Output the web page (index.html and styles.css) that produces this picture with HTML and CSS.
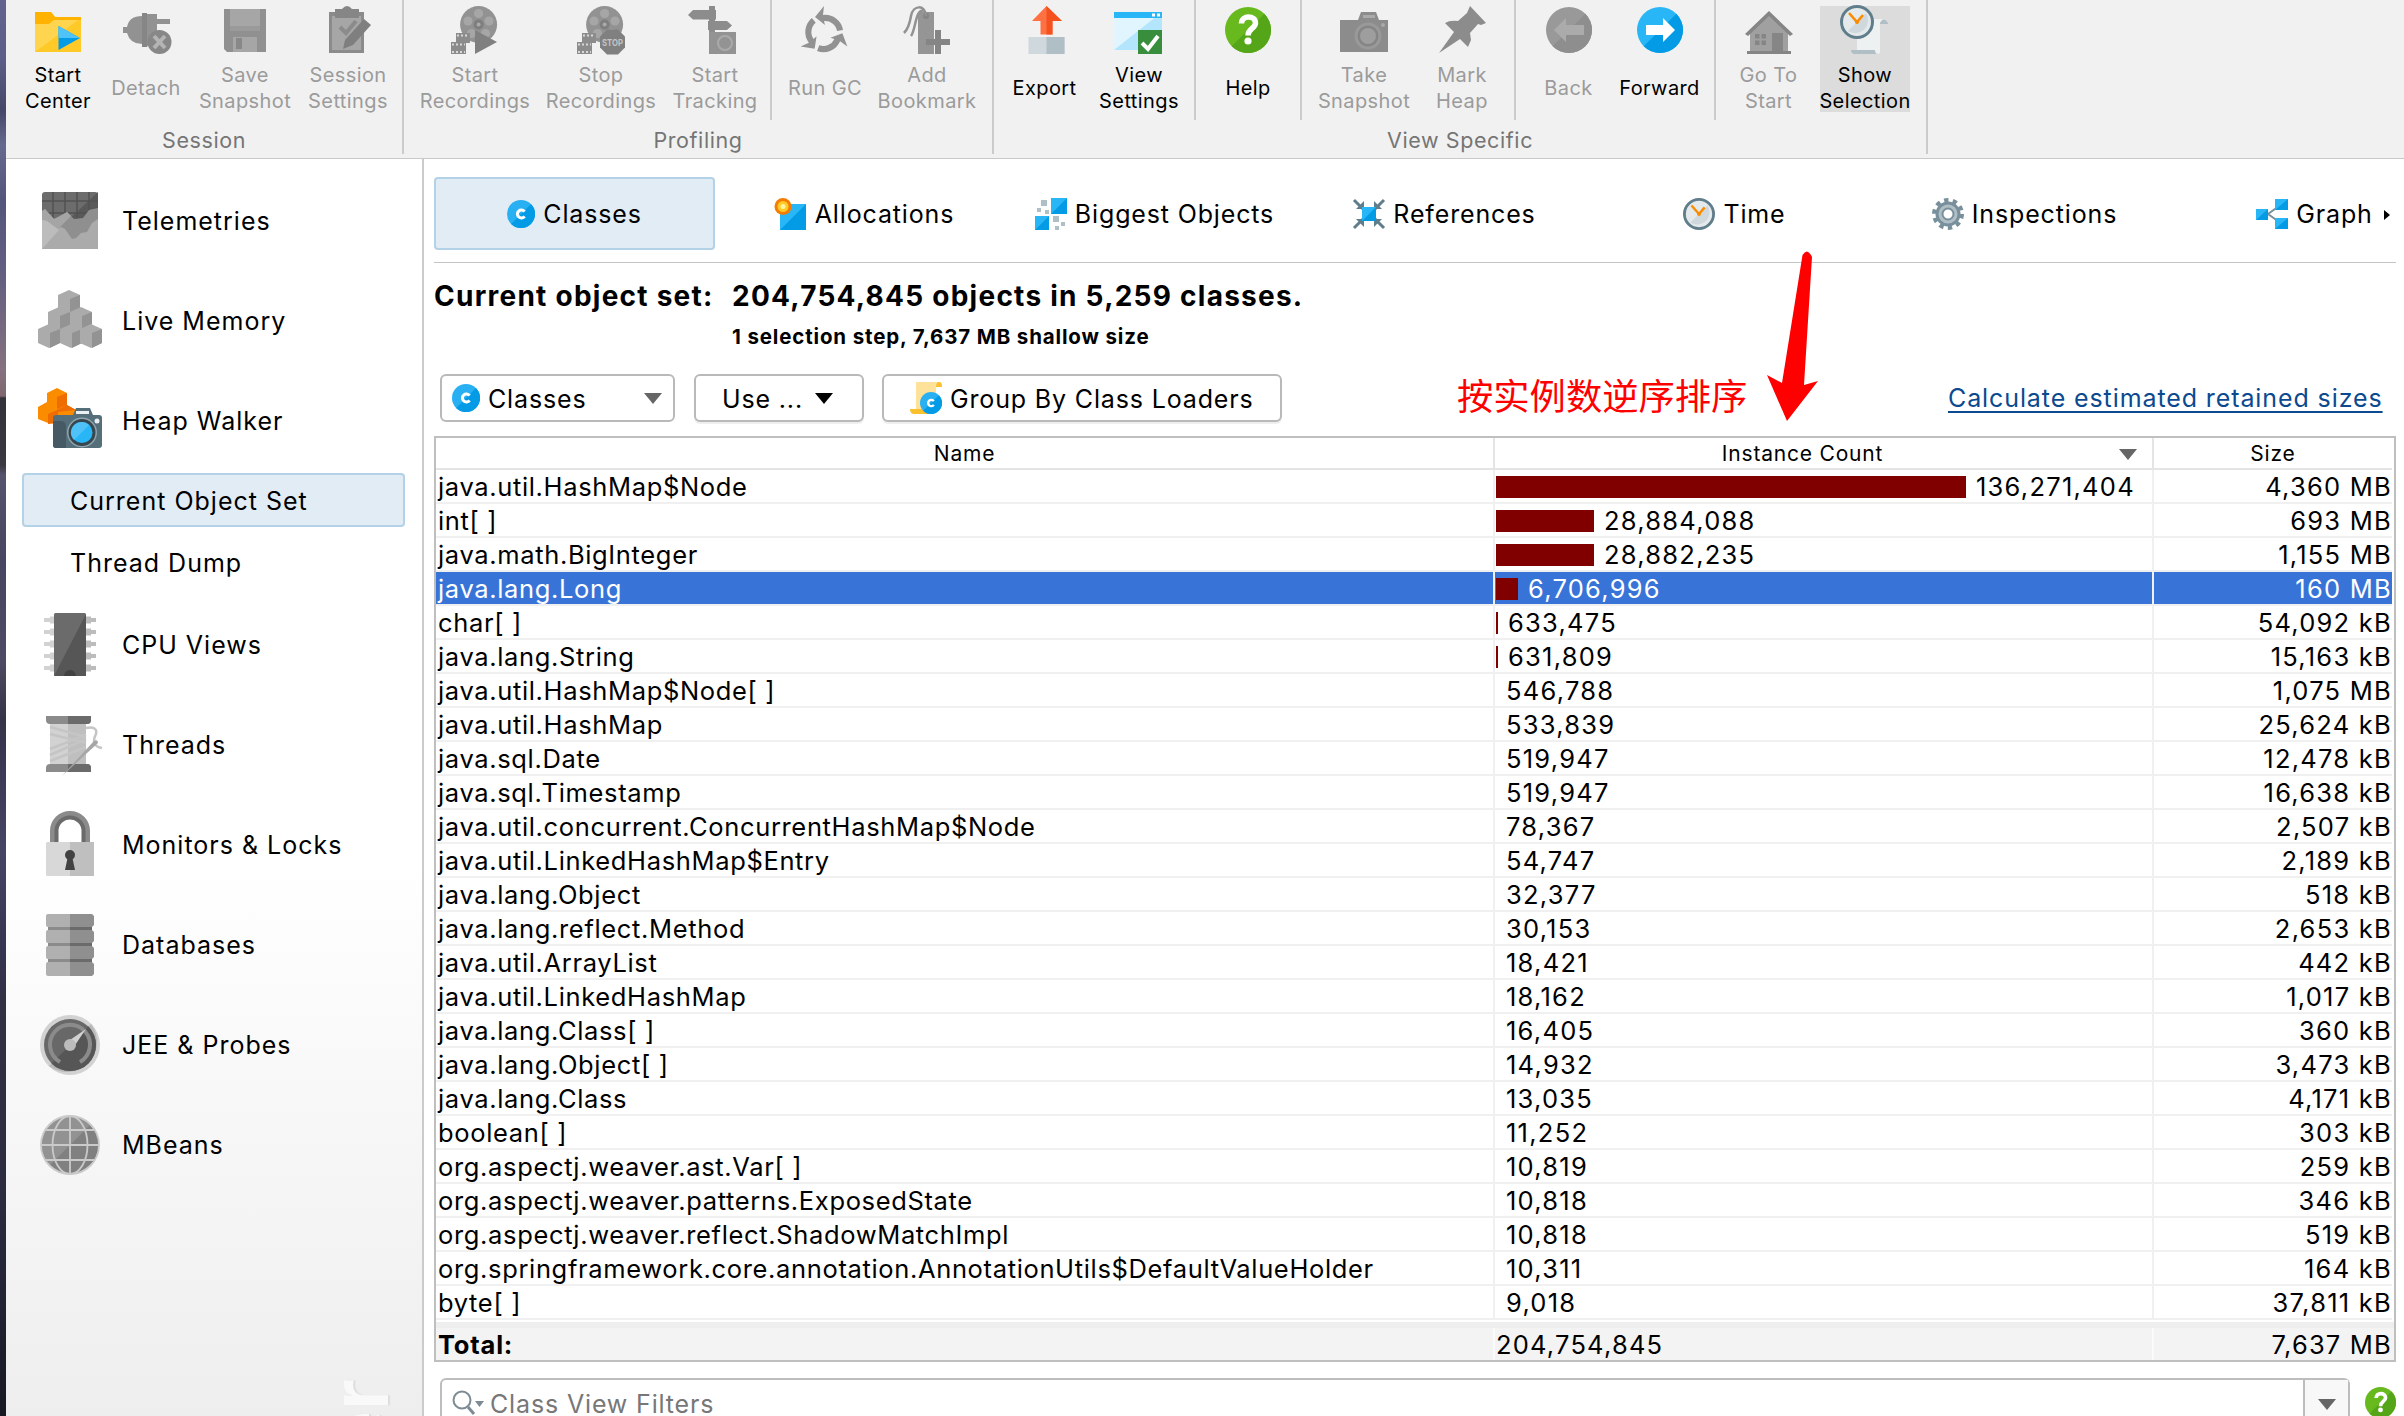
FILE: index.html
```html
<!DOCTYPE html>
<html lang="en">
<head>
<meta charset="utf-8">
<title>Heap Walker</title>
<link rel="stylesheet" href="styles.css">
</head>
<body>
<svg class="defs" width="0" height="0" aria-hidden="true">
  <defs>
    <symbol id="class-icon" viewBox="0 0 28 28">
      <circle cx="14" cy="14" r="14" fill="#29b0f3"/><path d="M24 4A14 14 0 0 1 4 24z" fill="#039be5"/>
      <path d="M17.6 11.6a4 4 0 1 0 0 4.8" fill="none" stroke="#fff" stroke-width="3"/>
    </symbol>
    <symbol id="help-icon" viewBox="0 0 46 46">
      <circle cx="23" cy="23" r="23" fill="#67b91e"/><path d="M39.3 6.7A23 23 0 0 1 6.7 39.3z" fill="#55a518"/>
      <path d="M16.5 16.5c0-9 14-8.500 14-.5 0 5.500-7.500 5.500-7.500 12.500" fill="none" stroke="#fff" stroke-width="5.500"/><circle cx="23" cy="34" r="3.600" fill="#fff"/>
    </symbol>
    <symbol id="clock-icon" viewBox="0 0 34 34">
      <circle cx="17" cy="17" r="15.500" fill="#e4e9eb" stroke="#607d8b" stroke-width="3"/><path d="M26 8A13 13 0 0 1 8 26z" fill="#cfd8dc"/>
      <path d="M9 8l8 9 6-7" fill="none" stroke="#fb8c00" stroke-width="2.600"/><circle cx="17" cy="17" r="2" fill="#fb8c00"/>
    </symbol>
    <symbol id="reel" viewBox="0 0 48 48">
      <circle cx="27.600" cy="18.500" r="18.500" fill="#929292"/>
      <g fill="#a6a6a6"><circle cx="27.600" cy="7.500" r="4.600"/><circle cx="38" cy="15" r="4.600"/><circle cx="34.500" cy="27.500" r="4.600"/><circle cx="20.500" cy="27.500" r="4.600"/><circle cx="17" cy="15" r="4.600"/></g>
      <circle cx="27.600" cy="18.500" r="5" fill="#7e7e7e"/><circle cx="27.600" cy="18.500" r="2" fill="#aaa"/>
      <path d="M5 27h14v10H15v11H-1V36H5z" fill="#8c8c8c"/>
      <path d="M6 29.500h12M1 38.500h13M1 46h13" stroke="#d8d8d8" stroke-width="2" stroke-dasharray="2 2"/>
    </symbol>
    <symbol id="cube" viewBox="0 0 24 24">
      <path d="M0 5L11 0l11 5v14l-11 5-11-5z" fill="#ababab"/><path d="M22 5v14l-10 5V9z" fill="#939393"/>
    </symbol>
  </defs>
</svg>
<div class="window">
  <div class="desktop"></div>
  <div class="app">
    <header class="ribbon">
      <section class="group session">
        <div class="tools">
          <div class="tool on w82"><svg viewBox="0 0 48 48"><path d="M1 6h16l4 5h26v35H1z" fill="#ffca28"/><path d="M1 6h16l4 5h26v3H20l-5 4H1z" fill="#ffb300"/><path d="M1 46V18h14l5-4h24z" fill="#ffd54f"/><path d="M24.500 20v24L46 32z" fill="#039be5"/><path d="M24.500 20v12H46z" fill="#4fc3f7"/></svg><span>Start<br>Center</span></div>
          <div class="tool w94"><svg viewBox="0 0 48 48"><g fill="#929292"><path d="M1 21h4q2-11 15-11v28Q8 38 5 27H1z"/><path d="M20 7h5v1h10v5h13v5H35v9L25 41h-5z"/></g><path d="M20 7h5v34h-5z" fill="#868686"/><circle cx="37.500" cy="36" r="12" fill="#878787"/><path d="M32 30l11 12M43 30L32 42" stroke="#b4b4b4" stroke-width="4"/></svg><span>Detach</span></div>
          <div class="tool w104"><svg viewBox="0 0 48 48"><path d="M3 3h42v43H6l-3-3z" fill="#909090"/><path d="M9 3h30v22H9z" fill="#a6a6a6"/><path d="M9 20h30v5H9z" fill="#9a9a9a"/><path d="M12 31h24v15H12z" fill="#a6a6a6"/><path d="M15 32h6v11h-6z" fill="#888"/></svg><span>Save<br>Snapshot</span></div>
          <div class="tool w102"><svg viewBox="0 0 48 48"><path d="M5 6h35v41H5z" fill="#8b8b8b"/><path d="M8 10h29v34H8z" fill="#a6a6a6"/><path d="M11 3h7q5-6 10 0h7v9H11z" fill="#868686"/><path d="M16 21l6 6L32 15" fill="none" stroke="#8b8b8b" stroke-width="4"/><path d="M40 13l7 6-18 20-10 4 2-9z" fill="#7f7f7f"/></svg><span>Session<br>Settings</span></div>
        </div>
        <div class="caption">Session</div>
      </section>
      <section class="group profiling">
        <div class="tools">
          <div class="tool w120"><svg viewBox="0 0 48 48"><use href="#reel"/><path d="M24 24v24l22-12z" fill="#808080"/></svg><span>Start<br>Recordings</span></div>
          <div class="tool w132"><svg viewBox="0 0 48 48"><use href="#reel"/><path d="M30 23.500h11l7 7v11l-7 7H30l-7-7v-11z" fill="#808080"/><text x="25" y="39.500" class="stop" textLength="21" lengthAdjust="spacingAndGlyphs">STOP</text></svg><span>Stop<br>Recordings</span></div>
          <div class="tool w96"><svg viewBox="0 0 48 48"><g fill="#8c8c8c"><path d="M18 0h6v48h-6z"/><path d="M2 4h23v9.500H2L-3 9z"/><path d="M17 15h19l5 4.500-5 4.500H17z"/></g><path d="M18 26h27v22H18z" fill="#939393"/><circle cx="34" cy="37" r="7" fill="none" stroke="#aaa" stroke-width="2"/></svg><span>Start<br>Tracking</span></div>
          <i class="rule before"></i>
          <div class="tool w90"><svg viewBox="0 0 48 48"><g id="gc" fill="#929292"><path d="M22 9A18 18 0 0 1 42 24l-6 1A12 12 0 0 0 23 15l1 4-10-8L23 0z"/></g><use href="#gc" transform="rotate(120 23 27)"/><use href="#gc" transform="rotate(240 23 27)"/></svg><span>Run GC</span></div>
          <div class="tool w114"><svg viewBox="0 0 48 48"><path d="M15 6h16v42H15z" fill="#959595"/><circle cx="23" cy="10" r="3" fill="#858585"/><path d="M23 10C22-2 10-1 8 10Q6 22 1 27M22 5C12 1 13 24 8 30" fill="none" stroke="#929292" stroke-width="2.500"/><path d="M23 33h9v-9h6v9h9v6h-9v9h-6v-9h-9z" fill="#858585"/></svg><span>Add<br>Bookmark</span></div>
        </div>
        <div class="caption">Profiling</div>
      </section>
      <section class="group specific">
        <div class="tools">
          <div class="tool on w85"><svg viewBox="0 0 48 48"><path d="M25.500 0L41 15h-9.500v13.500h-12V15H11z" fill="#ff7043"/><path d="M25.500 0L41 15h-9.500v13.500h-6z" fill="#f4511e"/><path d="M7.500 31h36v17h-36z" fill="#cfd8dc"/><path d="M25.500 31h18v17h-18z" fill="#b0bec5"/></svg><span>Export</span></div>
          <div class="tool on w104"><svg viewBox="0 0 48 48"><path d="M-1 6h48v38H-1z" fill="#e1f5fe"/><path d="M47 6v38H-1z" fill="#b3e5fc"/><path d="M-1 6h48v6H-1z" fill="#29b6f6"/><path d="M37 9h3m2 0h3" stroke="#fff" stroke-width="3"/><path d="M23 24h24v24H23z" fill="#388e3c"/><path d="M27 37l6 6 10-13" fill="none" stroke="#fff" stroke-width="4"/></svg><span>View<br>Settings</span></div>
          <i class="rule near"></i>
          <div class="tool on w104"><svg viewBox="0 0 48 48"><use href="#help-icon" x="1" y="1" width="46" height="46"/></svg><span>Help</span></div>
          <i class="rule after"></i>
          <div class="tool w112"><svg viewBox="0 0 48 48"><path d="M0 14h18l3-8h15l3 8h9v32H0z" fill="#8c8c8c"/><path d="M23 9h12v3H23z" fill="#aaa"/><circle cx="28" cy="30" r="13.500" fill="#999"/><circle cx="28" cy="30" r="10.500" fill="#858585"/><circle cx="28" cy="30" r="8" fill="#9e9e9e"/><circle cx="43" cy="19" r="2" fill="#aaa"/></svg><span>Take<br>Snapshot</span></div>
          <div class="tool w84"><svg viewBox="0 0 48 48"><path d="M32 0l16 17-5 2-3-1-8 9 1 7-3 7-8-8L1 47l15-21-9-9q5-3 13-2l9-8z" fill="#8c8c8c"/></svg><span>Mark<br>Heap</span></div>
          <i class="rule mid"></i>
          <div class="tool w93"><svg viewBox="0 0 48 48"><circle cx="24" cy="24" r="23" fill="#999"/><path d="M40.300 7.700A23 23 0 0 1 7.700 40.300z" fill="#8e8e8e"/><path d="M9 24l12-12v7h18v10H21v7z" fill="#ababab"/></svg><span>Back</span></div>
          <div class="tool on w89"><svg viewBox="0 0 48 48"><circle cx="24" cy="24" r="23" fill="#29b6f6"/><path d="M40.300 7.700A23 23 0 0 1 7.700 40.300z" fill="#039be5"/><path d="M39 24L27 12v7H10v10h17v7z" fill="#fff"/></svg><span>Forward</span></div>
          <i class="rule mid"></i>
          <div class="tool w93"><svg viewBox="0 0 48 48"><path d="M5 24L24 7l19 17v22H5z" fill="#a0a0a0"/><path d="M0 28L24 5l24 23-3 2L24 10 3 30z" fill="#858585"/><path d="M10 28h11v11H10zM2 45h44v3H2z" fill="#858585"/><path d="M15.500 28v11M10 33.500h11" stroke="#a0a0a0" stroke-width="2"/><path d="M27 27h11v18H27z" fill="#868686"/></svg><span>Go To<br>Start</span></div>
          <div class="tool on active w100"><svg viewBox="0 0 48 48"><path d="M16 13h26q-3 1-3 6v27q0 2-4 2H16z" fill="#eef1f2"/><path d="M39 18v-1q4-7 8 0v1zM10 44h24q0 4 3 4H14q-4 0-4-4z" fill="#b0bec5"/><use href="#clock-icon" x="-1" y="-1" width="34" height="34"/></svg><span>Show<br>Selection</span></div>
        </div>
        <div class="caption">View Specific</div>
      </section>
    </header>
    <div class="body">
      <nav class="sidebar">
        <div class="nav"><svg viewBox="0 0 64 64"><rect x="4" y="3" width="56" height="57" rx="3" fill="#6c6c6c"/><path d="M60 3v30H28z" fill="#595959"/><path d="M15 3v28M27 3v28M39 3v28M51 3v28M4 12h56M4 24h56" stroke="#515151" stroke-width="1.500"/><path d="M4 22l3-2 9 10 6-3 7-4 7 7 9-1 6-8 9-2v41H4z" fill="#8f8f8f"/><path d="M4 22l3-2 9 10 6-3 7-4 4 4L16 44H4z" fill="#a5a5a5"/><path d="M4 60V31l5 1 10 8 4-2 4 2 7 10 4-1 5-5 6-1 5-9 6-4v30z" fill="#ababab"/><path d="M4 60V31l5 1 12 9z" fill="#bcbcbc"/></svg>Telemetries</div>
        <div class="nav"><svg viewBox="0 0 64 64"><use href="#cube" x="20" y="1" width="24" height="24"/><use href="#cube" x="10" y="18" width="24" height="24"/><use href="#cube" x="32" y="18" width="24" height="24"/><use href="#cube" x="0" y="35" width="24" height="24"/><use href="#cube" x="22" y="35" width="24" height="24"/><use href="#cube" x="42" y="35" width="24" height="24"/></svg>Live Memory</div>
        <div class="nav"><svg viewBox="0 0 64 64"><path d="M9 4l10-5 10 5v12l9 5v10H20l-10 3L0 30V18l9-5z" fill="#fb8c00"/><path d="M29 4v12l-10 4V8zM20 23v11l-10 1V25l9-4 10-5 9 5z" fill="#ef6c00"/><path d="M35 26l3-7h14l3 7h6q3 0 3 3v27q0 3-3 3H18q-3 0-3-3V29q0-3 3-3z" fill="#546e7a"/><path d="M15 32h8q5 0 5 6v21H18q-3 0-3-3z" fill="#455a64"/><path d="M38 22h13v3H38z" fill="#eceff1"/><circle cx="44" cy="43.500" r="15" fill="#90a4ae"/><circle cx="44" cy="43.500" r="13.500" fill="#37474f"/><circle cx="44" cy="43.500" r="10.500" fill="#29b6f6"/><path d="M36 51a10.500 10.500 0 0 1 15-15z" fill="#4fc3f7"/><circle cx="59" cy="32" r="2.500" fill="#eceff1"/></svg>Heap Walker</div>
        <div class="sub chosen">Current Object Set</div>
        <div class="sub">Thread Dump</div>
        <div class="nav first"><svg viewBox="0 0 64 64"><path d="M6 7h12m-12 12h12M6 31h12M6 43h12M6 55h12" stroke="#d2d2d2" stroke-width="4"/><path d="M12 7h5m-5 12h5m-5 12h5m-5 12h5m-5 12h5" stroke="#d2d2d2" stroke-width="7"/><path d="M47 7h11M47 19h11M47 31h11M47 43h11M47 55h11" stroke="#bcbcbc" stroke-width="4"/><path d="M47 7h6m-6 12h6m-6 12h6m-6 12h6m-6 12h6" stroke="#bcbcbc" stroke-width="7"/><rect x="16" y="0" width="32" height="63" rx="1.500" fill="#6b6b6b"/><path d="M48 1v62H16z" fill="#565656"/><path d="M26 63a6 6 0 0 1 12 0z" fill="#424242"/></svg>CPU Views</div>
        <div class="nav"><svg viewBox="0 0 64 64"><path d="M12 10h36v42H12z" fill="#d2d2d2"/><path d="M30 10h18v42H30z" fill="#bfbfbf"/><path d="M12 14l36 10M12 21l36 9M12 42l36-16M12 48l36-14M12 36l36-14" stroke="#c5c5c5" stroke-width="2.500"/><path d="M8 3h45v4q0 4-4 4H12q-4 0-4-4zM8 59v-4q0-4 4-4h37q4 0 4 4v4z" fill="#8b8b8b"/><path d="M30 3h23v4q0 4-4 4H30zM30 51h19q4 0 4 4v4H30z" fill="#6b6b6b"/><path d="M48 15q12-2 10 6-6 12 6 14" fill="none" stroke="#c5c5c5" stroke-width="2.500"/><path d="M24 63l32-35q4-2 4 2z" fill="#a6a6a6"/></svg>Threads</div>
        <div class="nav"><svg viewBox="0 0 64 64"><path d="M16 31V18a16 16 0 0 1 32 0v13" fill="none" stroke="#8b8b8b" stroke-width="8"/><path d="M18.500 31V18a13.500 13.500 0 0 1 27 0v13" fill="none" stroke="#6b6b6b" stroke-width="4"/><rect x="8" y="29" width="48" height="34" rx="1.500" fill="#d8d8d8"/><path d="M32 29h24v34H32z" fill="#bfbfbf"/><circle cx="32" cy="42" r="5" fill="#424242"/><path d="M30 43h4l3 14H27z" fill="#424242"/></svg>Monitors &amp; Locks</div>
        <div class="nav"><svg viewBox="0 0 64 64"><path d="M10 5h22v54H10z" fill="#8b8b8b"/><path d="M32 5h22v54H32z" fill="#6b6b6b"/><g fill="#b0b0b0"><rect x="8" y="1" width="30" height="13" rx="2"/><rect x="8" y="17" width="30" height="13" rx="2"/><rect x="8" y="33" width="30" height="13" rx="2"/><rect x="8" y="49" width="30" height="14" rx="2"/></g><path d="M32 1h22l2 2v9l-2 2H32zm0 16h22l2 2v9l-2 2H32zm0 16h22l2 2v9l-2 2H32zm0 16h22l2 2v10l-2 2H32z" fill="#8f8f8f"/></svg>Databases</div>
        <div class="nav"><svg viewBox="0 0 64 64"><circle cx="32" cy="32" r="30" fill="#d2d2d2"/><path d="M53 11A30 30 0 0 1 11 53z" fill="#b8b8b8"/><circle cx="32" cy="32" r="26" fill="#686868"/><path d="M50.400 13.600A26 26 0 0 1 13.600 50.400z" fill="#565656"/><path d="M22 49a20 20 0 1 1 20 0" fill="none" stroke="#8b8b8b" stroke-width="4"/><path d="M29 29l19-13-13 19z" fill="#d2d2d2"/><circle cx="32" cy="32" r="6" fill="#bcbcbc"/></svg>JEE &amp; Probes</div>
        <div class="nav"><svg viewBox="0 0 64 64"><circle cx="32" cy="32" r="29" fill="#929292"/><path d="M52.500 11.500a29 29 0 0 1-41 41z" fill="#808080"/><g fill="none" stroke="#cacaca" stroke-width="1.800"><circle cx="32" cy="32" r="29"/><ellipse cx="32" cy="32" rx="17.500" ry="29"/><path d="M32 3v58M3 32h58M8 17h48M8 47h48"/></g></svg>MBeans</div>
        <div class="brand">JProfiler</div>
      </nav>
      <main class="main">
        <div class="tabs">
          <div class="tab picked"><svg class="i28"><use href="#class-icon"/></svg>Classes</div>
          <div class="tab"><svg class="i32" viewBox="0 0 32 32"><path d="M5 6h26v26H5z" fill="#29b6f6"/><path d="M31 6v26H5z" fill="#039be5"/><circle cx="8" cy="8.500" r="8.500" fill="#f57c00"/><circle cx="8" cy="8.500" r="5.500" fill="#ffca28"/><circle cx="8" cy="8.500" r="2.500" fill="#fff59d"/></svg>Allocations</div>
          <div class="tab"><svg class="i32" viewBox="0 0 32 32"><path d="M16 0h16v16H16zM0 18h14v14H0z" fill="#29b6f6"/><path d="M32 0v16H16zM14 18v14H0z" fill="#039be5"/><path d="M6 2h6v6H6zM2 10h4v4H2zM10 12h4v4h-4zM18 18h6v6h-6zM26 24h4v4h-4zM20 28h4v4h-4z" fill="#b0bec5"/></svg>Biggest Objects</div>
          <div class="tab"><svg class="i32" viewBox="0 0 32 32"><g stroke="#607d8b" stroke-width="3"><path d="M1 2l9 9M31 2l-9 9M1 30l9-9M31 30l-9-9"/></g><path d="M11 3v8H3zM21 3v8h8zM3 21h8v8zM29 21h-8v8z" fill="#607d8b"/><path d="M9 9h14v14H9z" fill="#29b6f6"/><path d="M23 9v14H9z" fill="#039be5"/></svg>References</div>
          <div class="tab"><svg class="i32"><use href="#clock-icon"/></svg>Time</div>
          <div class="tab"><svg class="i32" viewBox="0 0 32 32"><circle cx="16" cy="16" r="14" fill="none" stroke="#78909c" stroke-width="4" stroke-dasharray="4.400 4.400"/><circle cx="16" cy="16" r="8.500" fill="none" stroke="#78909c" stroke-width="8"/><circle cx="16" cy="16" r="8" fill="none" stroke="#b0bec5" stroke-width="3"/></svg>Inspections</div>
          <div class="tab"><svg class="i32" viewBox="0 0 32 32"><path d="M26 6L12 16l14 10" fill="none" stroke="#78909c" stroke-width="2"/><path d="M19 1h13v11H19zM0 11h12v11H0zM19 20h13v11H19z" fill="#29b6f6"/><path d="M32 1v11H19zM12 11v11H0zM32 20v11H19z" fill="#039be5"/></svg>Graph</div>
          <svg class="more" viewBox="0 0 6 10"><path d="M0 0l6 5-6 5z"/></svg>
        </div>
        <div class="summary">
          <div class="what">Current object set:</div>
          <div class="facts"><div class="total">204,754,845 objects in 5,259 classes.</div><div class="step">1 selection step, 7,637 MB shallow size</div></div>
        </div>
        <div class="actions">
          <div class="box combo"><svg class="i28"><use href="#class-icon"/></svg><span>Classes</span><i class="down grey"></i></div>
          <div class="box use"><span>Use ...</span><i class="down"></i></div>
          <div class="box loaders"><svg class="i32" viewBox="0 0 32 32"><path d="M6 0h24q2 1 2 5h-6v22H6z" fill="#ffe29a"/><path d="M26 5q0-5 3-5t3 5zM0 27h20v5H4q-4 0-4-5z" fill="#fbc02d"/><use href="#class-icon" x="10" y="10" width="22" height="22"/></svg><span>Group By Class Loaders</span></div>
          <div class="note">按实例数逆序排序</div>
          <a class="link">Calculate estimated retained sizes</a>
        </div>
        <div class="grid">
          <div class="head"><div>Name</div><div>Instance Count<i class="down grey"></i></div><div>Size</div></div>
          <div class="row"><div>java.util.HashMap$Node</div><div><b style="width:470px"></b>136,271,404</div><div>4,360 MB</div></div>
          <div class="row"><div>int[ ]</div><div><b style="width:98px"></b>28,884,088</div><div>693 MB</div></div>
          <div class="row"><div>java.math.BigInteger</div><div><b style="width:98px"></b>28,882,235</div><div>1,155 MB</div></div>
          <div class="row selected"><div>java.lang.Long</div><div><b style="width:22px"></b>6,706,996</div><div>160 MB</div></div>
          <div class="row"><div>char[ ]</div><div><b style="width:2px"></b>633,475</div><div>54,092 kB</div></div>
          <div class="row"><div>java.lang.String</div><div><b style="width:2px"></b>631,809</div><div>15,163 kB</div></div>
          <div class="row"><div>java.util.HashMap$Node[ ]</div><div><b></b>546,788</div><div>1,075 MB</div></div>
          <div class="row"><div>java.util.HashMap</div><div><b></b>533,839</div><div>25,624 kB</div></div>
          <div class="row"><div>java.sql.Date</div><div><b></b>519,947</div><div>12,478 kB</div></div>
          <div class="row"><div>java.sql.Timestamp</div><div><b></b>519,947</div><div>16,638 kB</div></div>
          <div class="row"><div>java.util.concurrent.ConcurrentHashMap$Node</div><div><b></b>78,367</div><div>2,507 kB</div></div>
          <div class="row"><div>java.util.LinkedHashMap$Entry</div><div><b></b>54,747</div><div>2,189 kB</div></div>
          <div class="row"><div>java.lang.Object</div><div><b></b>32,377</div><div>518 kB</div></div>
          <div class="row"><div>java.lang.reflect.Method</div><div><b></b>30,153</div><div>2,653 kB</div></div>
          <div class="row"><div>java.util.ArrayList</div><div><b></b>18,421</div><div>442 kB</div></div>
          <div class="row"><div>java.util.LinkedHashMap</div><div><b></b>18,162</div><div>1,017 kB</div></div>
          <div class="row"><div>java.lang.Class[ ]</div><div><b></b>16,405</div><div>360 kB</div></div>
          <div class="row"><div>java.lang.Object[ ]</div><div><b></b>14,932</div><div>3,473 kB</div></div>
          <div class="row"><div>java.lang.Class</div><div><b></b>13,035</div><div>4,171 kB</div></div>
          <div class="row"><div>boolean[ ]</div><div><b></b>11,252</div><div>303 kB</div></div>
          <div class="row"><div>org.aspectj.weaver.ast.Var[ ]</div><div><b></b>10,819</div><div>259 kB</div></div>
          <div class="row"><div>org.aspectj.weaver.patterns.ExposedState</div><div><b></b>10,818</div><div>346 kB</div></div>
          <div class="row"><div>org.aspectj.weaver.reflect.ShadowMatchImpl</div><div><b></b>10,818</div><div>519 kB</div></div>
          <div class="row"><div>org.springframework.core.annotation.AnnotationUtils$DefaultValueHolder</div><div><b></b>10,311</div><div>164 kB</div></div>
          <div class="row"><div>byte[ ]</div><div><b></b>9,018</div><div>37,811 kB</div></div>
          <div class="sum"><div>Total:</div><div>204,754,845</div><div>7,637 MB</div></div>
        </div>
        <div class="filter">
          <div class="field"><svg class="lens" viewBox="0 0 34 30"><circle cx="10" cy="11" r="8.500" fill="none" stroke="#7d8b94" stroke-width="2"/><path d="M16 18l6 7" stroke="#7d8b94" stroke-width="3"/><path d="M23 12h9l-4.500 6z" fill="#7d8b94"/></svg><span>Class View Filters</span><div class="drop"><i class="down grey"></i></div></div>
          <svg class="hint" viewBox="0 0 46 46"><use href="#help-icon"/></svg>
        </div>
        <svg class="arrow" viewBox="0 0 52 170"><path d="M35.500 4Q40-3 44 4L45 6 37 134l14-4L20 170 0 124l15 8z" fill="#f00"/></svg>
      </main>
    </div>
  </div>
</div>
</body>
</html>
```
FILE: styles.css
```css
* { box-sizing: border-box; }
body { margin: 0; font-family: Inter, "Noto Sans CJK SC", sans-serif; font-size: 25px; color: #000; background: #fff; }
.defs { position: absolute; }
svg { display: block; overflow: visible; flex: none; }
.window { display: flex; width: 2404px; height: 1416px; overflow: hidden; }
.desktop { flex: none; width: 6px; background: linear-gradient(#62648f 0, #5c5e88 60px, #464668 110px, #66698f 145px, #54557c 200px, #625e80 270px, #85717f 370px, #80666f 396px, #33313a 398px, #3a3840 465px, #55546c 475px, #47455f 560px, #4e4a63 660px, #353349 720px, #454464 850px, #302f46 1000px, #2b2b41 1200px, #171923 1416px); }
.app { flex: 1; min-width: 0; display: flex; flex-direction: column; }

/* Toolbar */
.ribbon { flex: none; display: flex; height: 159px; background: #f1f1f1; border-bottom: 1px solid #c9c9c9; }
.group { height: 154px; border-right: 2px solid #cbcbcb; }
.session { width: 398px; }
.session .tools { padding-left: 11px; }
.profiling { width: 590px; }
.profiling .tools { padding-left: 11px; }
.specific { width: 934px; }
.specific .tools { padding-left: 8px; }
.tools { display: flex; height: 120px; }
.caption { text-align: center; font-size: 21.5px; line-height: 40px; letter-spacing: .6px; color: #757575; }
.tool { display: flex; flex-direction: column; align-items: center; padding-top: 6px; font-size: 20px; line-height: 26px; color: #9b9b9b; text-align: center; white-space: nowrap; }
.tool svg { width: 48px; height: 48px; margin-bottom: 8px; }
.tool span { display: flex; align-items: center; height: 52px; letter-spacing: .4px; }
.on { color: #000; }
.active { background: linear-gradient(#dcdcdc, #dcdcdc) center 6px / 90px 106px no-repeat; }
.stop { font: bold 9px Inter, sans-serif; letter-spacing: 0; fill: #c4c4c4; }
.rule { width: 2px; background: #cbcbcb; }
.before { margin: 0 8px 0 7px; }
.near { margin-left: 3px; }
.after { margin-right: 6px; }
.mid { margin: 0 6px 0 10px; }
.w82 { width: 82px; } .w84 { width: 84px; } .w85 { width: 85px; } .w89 { width: 89px; } .w90 { width: 90px; }
.w93 { width: 93px; } .w94 { width: 94px; } .w96 { width: 96px; } .w100 { width: 100px; } .w102 { width: 102px; }
.w104 { width: 104px; } .w112 { width: 112px; } .w114 { width: 114px; } .w120 { width: 120px; } .w132 { width: 132px; }

/* Navigation */
.body { flex: 1; display: flex; min-height: 0; }
.sidebar { position: relative; flex: none; width: 418px; padding-top: 12px; overflow: hidden; border-right: 2px solid #cbcbcb; background: linear-gradient(#fff 0, #fff 700px, #eee 1257px); }
.nav { display: flex; align-items: center; gap: 20px; height: 100px; padding-left: 32px; letter-spacing: 1px; }
.nav svg { width: 64px; height: 64px; }
.sub { height: 54px; margin: 0 17px 0 16px; padding-left: 46px; line-height: 53px; border: 2px solid transparent; letter-spacing: 1px; }
.sub.chosen { margin-top: 2px; margin-bottom: 8px; background: #e2ecf5; border-color: #b3d1e7; border-radius: 4px; }
.nav.first { margin-top: 6px; }
.brand { position: absolute; left: 313px; top: 1220px; writing-mode: vertical-rl; transform: rotate(180deg); font-size: 80px; font-weight: 600; line-height: 80px; color: #f9f9f9; text-shadow: 0 2px 1px #ddd; }

/* Content */
.main { position: relative; flex: 1; min-width: 0; padding: 0 8px 0 10px; background: #fff; display: flex; flex-direction: column; }
.tabs { flex: none; display: flex; gap: 9px; height: 104px; padding-top: 18px; border-bottom: 1px solid #c4c4c4; }
.tab { flex: none; display: flex; align-items: center; justify-content: center; gap: 8px; width: 281px; height: 73px; padding-top: 1px; line-height: 30px; white-space: nowrap; letter-spacing: .85px; }
.picked { background: #e2ecf5; border: 2px solid #b3d1e7; border-radius: 4px; }
.i28 { width: 28px; height: 28px; }
.i32 { width: 32px; height: 32px; }
.tab:last-of-type { margin-right: -80px; }
.more { width: 6px; height: 10px; margin-top: 33px; }
.summary { flex: none; display: flex; height: 109px; padding-top: 12px; font-weight: 700; white-space: nowrap; }
.what { width: 298px; font-size: 28px; line-height: 43px; letter-spacing: 1.25px; }
.total { font-size: 28px; line-height: 43px; letter-spacing: 1.25px; }
.step { font-size: 20.5px; line-height: 38px; letter-spacing: .85px; }
.actions { flex: none; display: flex; height: 64px; padding-left: 6px; padding-top: 2px; white-space: nowrap; letter-spacing: .85px; }
.box { flex: none; display: flex; align-items: center; height: 48px; border: 2px solid #b9b9b9; border-radius: 6px; background: #fff; box-shadow: 0 2px 1px #eee; }
.box span { padding-top: 1px; }
.down { flex: none; width: 0; height: 0; border: 9px solid transparent; border-top: 11px solid #000; border-bottom: 0; }
.down.grey { border-top-color: #666; }
.combo { width: 235px; padding: 0 11px 0 10px; gap: 8px; box-shadow: none; }
.combo span { flex: 1; }
.use { width: 170px; margin-left: 19px; padding-left: 26px; gap: 12px; }
.loaders { width: 400px; margin-left: 18px; padding-left: 26px; gap: 8px; }
.note { flex: none; width: 491px; margin-left: 175px; font: 36.3px/40px "Noto Sans CJK SC", sans-serif; letter-spacing: 0; color: #f00; }
.link { line-height: 49px; letter-spacing: .9px; color: #0b4a8f; text-decoration: underline; text-underline-offset: 4px; text-decoration-thickness: 2px; }

.grid { flex: none; height: 926px; border: 2px solid #bfbfbf; }
.head, .row, .sum { display: grid; grid-template-columns: 1059px 659px 238px; width: 1956px; }
.head { height: 32px; font-size: 21px; line-height: 32px; letter-spacing: .8px; text-align: center; border-bottom: 2px solid #e4e4e4; }
.head > div { position: relative; height: 30px; border-right: 2px solid #e4e4e4; }
.head > div:nth-child(2) { padding-right: 42px; }
.head > div:last-child, .row > div:last-child, .sum > div:last-child { border-right: 0; }
.head .down { position: absolute; right: 15px; top: 11px; }
.row { height: 34px; font-size: 25.5px; line-height: 34px; letter-spacing: 1.25px; border-bottom: 2px solid #f0f0f0; white-space: nowrap; }
.row > div { height: 32px; border-right: 2px solid #f0f0f0; padding-left: 1px; }
.row > div:first-child { padding-left: 2px; letter-spacing: .65px; }
.row > div:nth-child(2) { display: flex; }
.row > div:last-child, .sum > div:last-child { text-align: right; }
.row b { height: 22px; margin: 6px 10px 0 0; background: #800000; }
.row b:not([style]) { margin-left: 0; }
.selected { color: #fff; }
.selected > div { background: #3874d8; }
.sum { height: 38px; margin-top: 2px; padding-top: 6px; font-size: 25.5px; line-height: 33px; letter-spacing: 1.2px; background: linear-gradient(#eee 6px, #f3f3f3 6px); width: 1958px; }
.sum > div { height: 32px; padding-left: 1px; border-right: 2px solid #fafafa; }
.sum > div:first-child { padding-left: 2px; font-weight: 700; letter-spacing: .8px; }

.filter { flex: none; display: flex; height: 60px; margin-top: 16px; padding-left: 6px; }
.field { display: flex; align-items: center; width: 1910px; height: 52px; padding-left: 10px; border: 2px solid #bdbdbd; border-radius: 6px; line-height: 24px; color: #777; letter-spacing: .85px; }
.lens { width: 34px; height: 30px; margin-right: 4px; }
.field span { flex: 1; }
.drop { display: flex; align-items: center; justify-content: center; align-self: stretch; width: 45px; border-left: 2px solid #bdbdbd; background: #f8f8f8; }
.hint { width: 31px; height: 31px; margin: 9px 0 0 15px; }
.arrow { position: absolute; left: 1343px; top: 92px; width: 52px; height: 170px; }
```
